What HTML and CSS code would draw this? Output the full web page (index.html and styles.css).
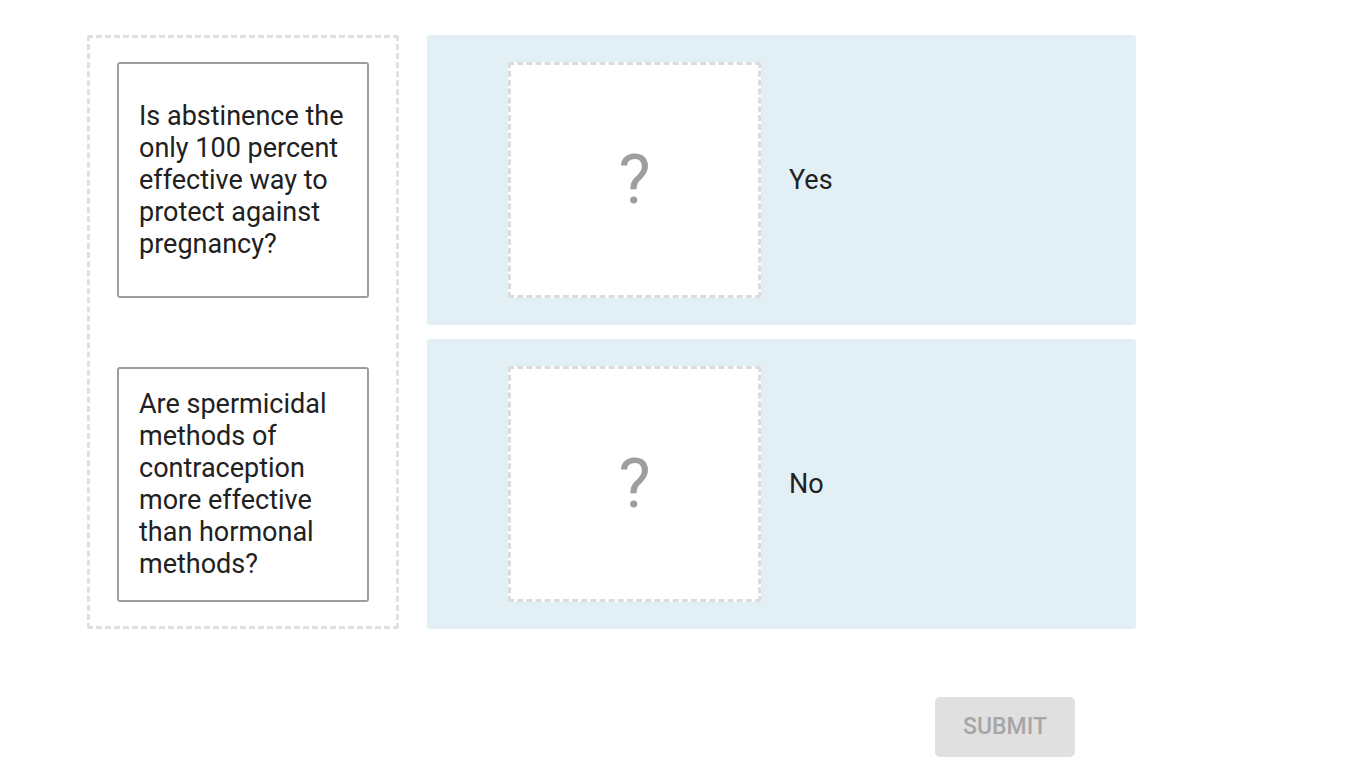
FILE: index.html
```html
<!DOCTYPE html>
<html lang="en">
<head>
  <meta charset="UTF-8">
  <title>Matching</title>
  <link rel="stylesheet" href="styles.css">
</head>
<body>

<div class="quiz">
  <div class="quiz-board">
    <!-- 题目卡片 -->
    <div class="card-pool">
      <div class="card">Is abstinence the only 100 percent effective way to protect against pregnancy?</div>
      <div class="card">Are spermicidal methods of contraception more effective than hormonal methods?</div>
    </div>
    <!-- 答案区域 -->
    <div class="targets">
      <div class="target-row">
        <div class="drop-box"><span>?</span></div>
        <div class="target-label">Yes</div>
      </div>
      <div class="target-row">
        <div class="drop-box"><span>?</span></div>
        <div class="target-label">No</div>
      </div>
    </div>
  </div>
  <div class="quiz-footer">
    <a href="javascript:void(0);" class="submit-btn">SUBMIT</a>
  </div>
</div>

</body>
</html>
```
FILE: styles.css
```css
* {
  margin: 0;
  padding: 0;
  box-sizing: border-box;
}

body {
  background: #ffffff;
  font-family: Roboto, "Liberation Sans", sans-serif;
  color: #212121;
}

.quiz {
  padding: 35px 0 0 87px;
}

.quiz-board {
  display: flex;
  gap: 28px;
}

.card-pool {
  width: 312px;
  height: 594px;
  border: 3px dashed #e0e0e0;
  border-radius: 2px;
  padding: 24px 27px;
  display: flex;
  flex-direction: column;
  gap: 69px;
}

.card {
  width: 252px;
  height: 236px;
  border: 2px solid #9e9e9e;
  border-radius: 3px;
  padding: 0 12px 0 20px;
  display: flex;
  align-items: center;
  font-size: 27px;
  line-height: 32px;
}

.targets {
  display: flex;
  flex-direction: column;
  gap: 14px;
}

.target-row {
  width: 709px;
  height: 290px;
  background: #e2eff4;
  border-radius: 3px;
  padding-left: 81px;
  display: flex;
  align-items: center;
  gap: 28px;
}

.drop-box {
  width: 253px;
  height: 236px;
  background: #ffffff;
  border: 3px dashed #dcdcdc;
  border-radius: 3px;
  display: flex;
  align-items: center;
  justify-content: center;
}

.drop-box span {
  font-size: 68px;
  color: #9e9e9e;
  line-height: 1;
}

.target-label {
  font-size: 27px;
}

.quiz-footer {
  width: 1049px;
  display: flex;
  justify-content: flex-end;
  padding: 68px 61px 0 0;
}

a {
  text-decoration: none;
}

.submit-btn {
  display: block;
  width: 140px;
  height: 60px;
  line-height: 60px;
  text-align: center;
  background: #e0e0e0;
  color: #a6a6a6;
  border-radius: 5px;
  font-size: 23px;
  font-weight: 500;
}
```
